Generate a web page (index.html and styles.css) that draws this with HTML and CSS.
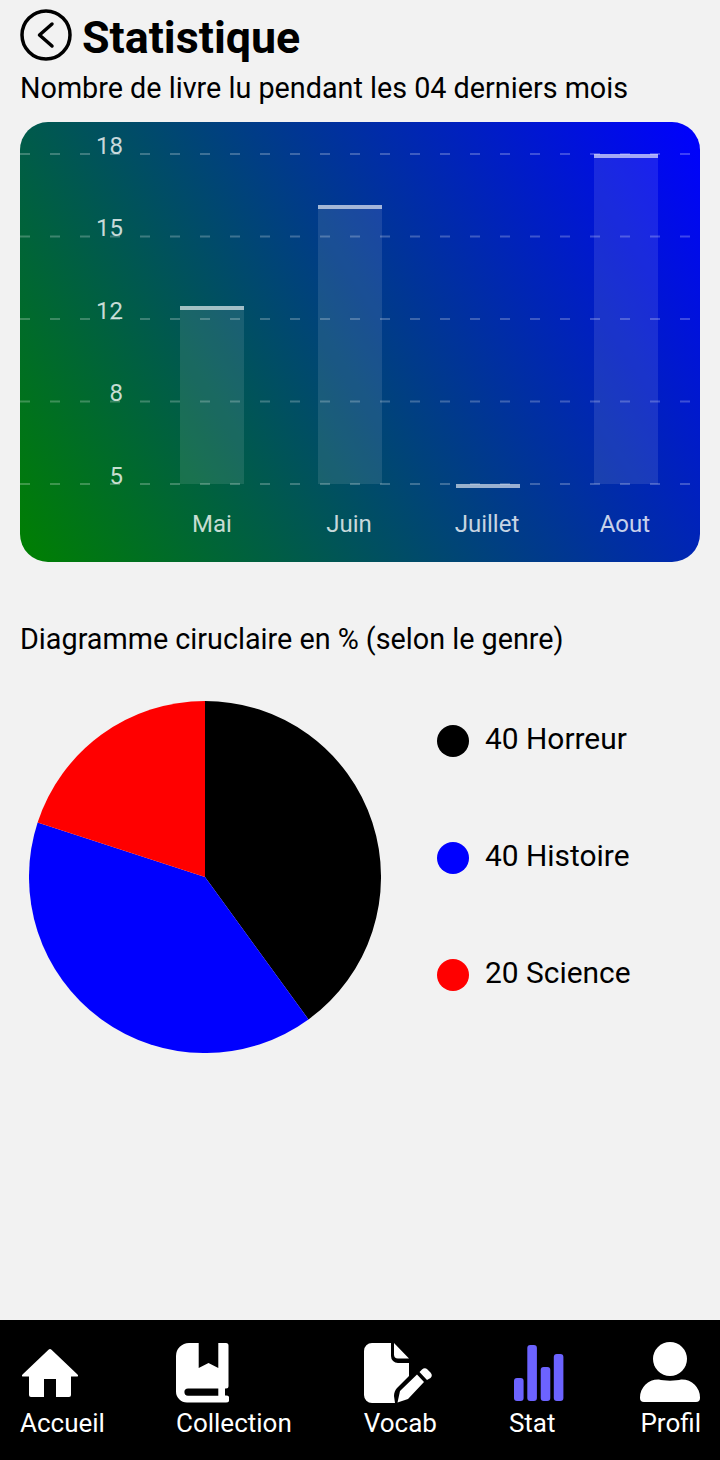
FILE: index.html
```html
<!DOCTYPE html>
<html lang="fr">
<head>
<meta charset="utf-8">
<title>Statistique</title>
<link rel="stylesheet" href="styles.css">
</head>
<body>
<div class="screen">
  <main class="content">
    <header class="header">
      <svg class="back" viewBox="0 0 52 52"><circle cx="26" cy="26" r="24" fill="none" stroke="#000" stroke-width="3.500"/><path d="M32 15 19.500 26 32 37" fill="none" stroke="#000" stroke-width="3.500" stroke-linecap="round" stroke-linejoin="round"/></svg>
      <h1 class="title">Statistique</h1>
    </header>
    <p class="subtitle">Nombre de livre lu pendant les 04 derniers mois</p>
    <svg class="chart" viewBox="0 0 680 440">
      <defs>
        <linearGradient id="bg" gradientUnits="userSpaceOnUse" x1="0" y1="440" x2="680" y2="0">
          <stop offset="0" stop-color="#008000"/><stop offset="1" stop-color="#0000ff"/>
        </linearGradient>
      </defs>
      <rect width="680" height="440" rx="28" fill="url(#bg)"/>
      <g class="bars">
        <rect x="160" y="184" width="64" height="178"/>
        <rect x="298" y="83" width="64" height="279"/>
        <rect x="574" y="32" width="64" height="330"/>
      </g>
      <g class="caps">
        <rect x="160" y="184" width="64" height="4"/>
        <rect x="298" y="83" width="64" height="4"/>
        <rect x="436" y="362" width="64" height="4"/>
        <rect x="574" y="32" width="64" height="4"/>
      </g>
      <g class="grid">
        <line x1="0" x2="680" y1="32" y2="32"/>
        <line x1="0" x2="680" y1="114.500" y2="114.500"/>
        <line x1="0" x2="680" y1="197" y2="197"/>
        <line x1="0" x2="680" y1="279.500" y2="279.500"/>
        <line x1="0" x2="680" y1="362" y2="362"/>
      </g>
      <g class="ylabels">
        <text x="103" y="32">18</text>
        <text x="103" y="114">15</text>
        <text x="103" y="197">12</text>
        <text x="103" y="279">8</text>
        <text x="103" y="362">5</text>
      </g>
      <g class="xlabels">
        <text x="192" y="410">Mai</text>
        <text x="329" y="410">Juin</text>
        <text x="467" y="410">Juillet</text>
        <text x="605" y="410">Aout</text>
      </g>
    </svg>
    <h2 class="section">Diagramme ciruclaire en % (selon le genre)</h2>
    <section class="pie-row">
      <svg class="pie" viewBox="0 0 352 352">
        <path fill="#000" d="M176 176V0A176 176 0 0 1 279.450 318.390Z"/>
        <path fill="#00f" d="M176 176 279.450 318.390A176 176 0 0 1 8.610 121.610Z"/>
        <path fill="#f00" d="M176 176 8.610 121.610A176 176 0 0 1 176 0Z"/>
      </svg>
      <ul class="legend">
        <li class="legend-item"><span class="dot dot-black"></span><span class="legend-label">40 Horreur</span></li>
        <li class="legend-item"><span class="dot dot-blue"></span><span class="legend-label">40 Histoire</span></li>
        <li class="legend-item"><span class="dot dot-red"></span><span class="legend-label">20 Science</span></li>
      </ul>
    </section>
  </main>
  <nav class="nav">
    <a class="nav-item item-home">
      <svg class="icon icon-home" viewBox="0 0 56 48"><path fill="#fff" d="M26.500.7a2.200 2.200 0 0 1 3 0L55.500 25.500c1 1 .6 2-.6 2H49V46a2 2 0 0 1-2 2H34V30H22V48H9a2 2 0 0 1-2-2V27.500H1.100c-1.200 0-1.600-1-.6-2Z"/></svg>
      <span>Accueil</span>
    </a>
    <a class="nav-item item-book">
      <svg class="icon icon-book" viewBox="0 0 53 60"><path fill="#fff" fill-rule="evenodd" d="M13 0H22.700V25L32.500 20 42.300 25V0H50a2.500 2.500 0 0 1 2.500 2.500V43a2.500 2.500 0 0 1-2.500 2.500H49V52.500H50a3.300 3.300 0 0 1 0 7H11A11 11 0 0 1 0 48.500V13A13 13 0 0 1 13 0ZM12 45.500a3.600 3.600 0 0 0 0 7.200H42.300V45.500Z"/></svg>
      <span>Collection</span>
    </a>
    <a class="nav-item item-vocab">
      <svg class="icon icon-vocab" viewBox="0 0 68 60"><path fill="#fff" d="M8 0H27V13a7 7 0 0 0 7 7H45V33L33 45C31 47 30 50 30 53L31 60H8a8 8 0 0 1-8-8V8A8 8 0 0 1 8 0ZM30 0 45 15.500H34a4 4 0 0 1-4-4ZM33.500 59.500 36 48 53 31.500 60 39 44 56ZM55.500 29 58 26.500a4 4 0 0 1 5.500 0L66.500 29.500a4 4 0 0 1 0 5.500L63 37Z"/></svg>
      <span>Vocab</span>
    </a>
    <a class="nav-item item-stat">
      <svg class="icon icon-stat" viewBox="0 0 50 56"><g fill="#6c63ff"><rect x="0" y="33" width="9.600" height="23" rx="3"/><rect x="13.300" y="0" width="9.600" height="56" rx="3"/><rect x="26.700" y="22" width="9.600" height="34" rx="3"/><rect x="39.800" y="9" width="9.600" height="47" rx="3"/></g></svg>
      <span>Stat</span>
    </a>
    <a class="nav-item item-profil">
      <svg class="icon icon-profil" viewBox="0 0 60 60"><circle cx="30" cy="17" r="17" fill="#fff"/><path fill="#fff" d="M19 37.500C23 39 37 39 41 37.500H42A18 18 0 0 1 60 55.500V56a4 4 0 0 1-4 4H4a4 4 0 0 1-4-4V55.500A18 18 0 0 1 18 37.500Z"/></svg>
      <span>Profil</span>
    </a>
  </nav>
</div>
</body>
</html>
```
FILE: styles.css
```css
* { box-sizing: border-box; }
html, body { margin: 0; padding: 0; }
body { background: #f2f2f2; font-family: Roboto, "Liberation Sans", sans-serif; color: #000; }
.screen { width: 720px; height: 1460px; display: flex; flex-direction: column; overflow: hidden; }
.content { flex: 1; padding: 9px 20px 0; }
.header { display: flex; align-items: flex-start; gap: 10px; height: 52px; }
.back { width: 52px; height: 52px; display: block; }
.title { margin: 3px 0 0; font-size: 44.800px; line-height: 52px; font-weight: 700; }
.subtitle { margin: 11px 0 0; font-size: 28.750px; line-height: 33px; }
.chart { display: block; width: 680px; height: 440px; margin-top: 17px; }
.bars rect { fill: rgba(255,255,255,.1); }
.caps rect { fill: rgba(255,255,255,.6); }
.grid line { stroke: rgba(255,255,255,.24); stroke-width: 2; stroke-dasharray: 10 20; }
.ylabels text, .xlabels text { font-family: Roboto, sans-serif; font-size: 24px; fill: rgba(255,255,255,.78); }
.ylabels text { text-anchor: end; }
.xlabels text { text-anchor: middle; }
.section { margin: 61px 0 0; font-size: 28.750px; line-height: 33px; font-weight: 400; }
.pie-row { display: flex; margin-top: 45px; }
.pie { display: block; width: 352px; height: 352px; margin-left: 9px; flex: none; }
.legend { list-style: none; margin: 24px 0 0 56px; padding: 0; display: flex; flex-direction: column; gap: 85px; }
.legend-item { display: flex; align-items: center; gap: 16px; height: 32px; font-size: 29.900px; }
.legend-label { line-height: 32px; margin-bottom: 4px; }
.dot { width: 32px; height: 32px; border-radius: 50%; flex: none; }
.dot-black { background: #000; }
.dot-blue { background: #00f; }
.dot-red { background: #f00; }
.nav { height: 140px; flex: none; background: #000; color: #fff; padding: 0 19px 0 20px; display: flex; align-items: flex-start; }
.nav-item { display: flex; flex-direction: column; align-items: flex-start; font-size: 26px; line-height: 33px; }
.item-book { margin-left: 71px; }
.item-vocab { margin-left: 72px; }
.item-stat { margin-left: 72px; }
.item-profil { margin-left: auto; }
.icon { display: block; }
.icon-home { width: 56px; height: 48px; margin: 29px 0 10px 2px; }
.icon-book { width: 53px; height: 60px; margin: 23px 0 4px 0; }
.icon-vocab { width: 68px; height: 60px; margin: 23px 0 4px 0; }
.icon-stat { width: 50px; height: 56px; margin: 25px 0 6px 5px; }
.icon-profil { width: 60px; height: 60px; margin: 22px 0 5px 0; }
```
